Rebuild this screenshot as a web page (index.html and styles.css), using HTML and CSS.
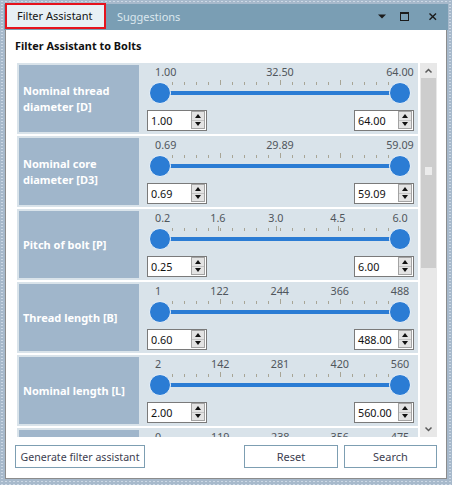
FILE: index.html
```html
<!DOCTYPE html>
<html>
<head>
<meta charset="utf-8">
<link rel="stylesheet" href="styles.css">
</head>
<body>
<div class="window">
  <div class="tabbar">
    <div class="tab tab-active">Filter Assistant</div>
    <div class="tab tab-inactive">Suggestions</div>
    <svg class="win-icons" width="70" height="26" viewBox="0 0 70 26">
      <polygon points="6,10.5 14,10.5 10,14.5" fill="#1b1b1b"/>
      <rect x="28.5" y="8.5" width="8" height="8" fill="none" stroke="#1b1b1b" stroke-width="1"/>
      <rect x="28" y="8" width="9" height="2" fill="#1b1b1b"/>
      <path d="M57.5 9.5 L64 15.8 M64 9.5 L57.5 15.8" stroke="#1b1b1b" stroke-width="1.4"/>
    </svg>
  </div>
  <div class="panel">
    <div class="title">Filter Assistant to Bolts</div>
    <div class="scroller">
      <div class="rows">

        <div class="row">
          <div class="row-label">Nominal thread<br>diameter [D]</div>
          <div class="slider">
            <div class="scale">
              <div class="ticks"></div>
              <span class="tick-tall" style="left:25%"></span>
              <span class="tick-tall" style="left:50%"></span>
              <span class="tick-tall" style="left:75%"></span>
              <span class="tick-label first">1.00</span>
              <span class="tick-label" style="left:50%">32.50</span>
              <span class="tick-label" style="left:100%">64.00</span>
              <div class="track"></div>
              <span class="thumb" style="left:0%"></span>
              <span class="thumb" style="left:100%"></span>
            </div>
            <div class="inputs">
              <div class="num"><span class="num-value">1.00</span><span class="spin"><span class="spin-up"></span><span class="spin-down"></span></span></div>
              <div class="num"><span class="num-value">64.00</span><span class="spin"><span class="spin-up"></span><span class="spin-down"></span></span></div>
            </div>
          </div>
        </div>

        <div class="row">
          <div class="row-label">Nominal core<br>diameter [D3]</div>
          <div class="slider">
            <div class="scale">
              <div class="ticks"></div>
              <span class="tick-tall" style="left:25%"></span>
              <span class="tick-tall" style="left:50%"></span>
              <span class="tick-tall" style="left:75%"></span>
              <span class="tick-label first">0.69</span>
              <span class="tick-label" style="left:50%">29.89</span>
              <span class="tick-label" style="left:100%">59.09</span>
              <div class="track"></div>
              <span class="thumb" style="left:0%"></span>
              <span class="thumb" style="left:100%"></span>
            </div>
            <div class="inputs">
              <div class="num"><span class="num-value">0.69</span><span class="spin"><span class="spin-up"></span><span class="spin-down"></span></span></div>
              <div class="num"><span class="num-value">59.09</span><span class="spin"><span class="spin-up"></span><span class="spin-down"></span></span></div>
            </div>
          </div>
        </div>

        <div class="row">
          <div class="row-label">Pitch of bolt [P]</div>
          <div class="slider">
            <div class="scale">
              <div class="ticks"></div>
              <span class="tick-tall" style="left:24.1%"></span>
              <span class="tick-tall" style="left:48.3%"></span>
              <span class="tick-tall" style="left:74.1%"></span>
              <span class="tick-label first">0.2</span>
              <span class="tick-label" style="left:24.1%">1.6</span>
              <span class="tick-label" style="left:48.3%">3.0</span>
              <span class="tick-label" style="left:74.1%">4.5</span>
              <span class="tick-label" style="left:100%">6.0</span>
              <div class="track"></div>
              <span class="thumb" style="left:0%"></span>
              <span class="thumb" style="left:100%"></span>
            </div>
            <div class="inputs">
              <div class="num"><span class="num-value">0.25</span><span class="spin"><span class="spin-up"></span><span class="spin-down"></span></span></div>
              <div class="num"><span class="num-value">6.00</span><span class="spin"><span class="spin-up"></span><span class="spin-down"></span></span></div>
            </div>
          </div>
        </div>

        <div class="row">
          <div class="row-label">Thread length [B]</div>
          <div class="slider">
            <div class="scale">
              <div class="ticks"></div>
              <span class="tick-tall" style="left:24.8%"></span>
              <span class="tick-tall" style="left:49.9%"></span>
              <span class="tick-tall" style="left:74.9%"></span>
              <span class="tick-label first">1</span>
              <span class="tick-label" style="left:24.8%">122</span>
              <span class="tick-label" style="left:49.9%">244</span>
              <span class="tick-label" style="left:74.9%">366</span>
              <span class="tick-label" style="left:100%">488</span>
              <div class="track"></div>
              <span class="thumb" style="left:0%"></span>
              <span class="thumb" style="left:100%"></span>
            </div>
            <div class="inputs">
              <div class="num"><span class="num-value">0.60</span><span class="spin"><span class="spin-up"></span><span class="spin-down"></span></span></div>
              <div class="num"><span class="num-value">488.00</span><span class="spin"><span class="spin-up"></span><span class="spin-down"></span></span></div>
            </div>
          </div>
        </div>

        <div class="row">
          <div class="row-label">Nominal length [L]</div>
          <div class="slider">
            <div class="scale">
              <div class="ticks"></div>
              <span class="tick-tall" style="left:25.1%"></span>
              <span class="tick-tall" style="left:50%"></span>
              <span class="tick-tall" style="left:74.9%"></span>
              <span class="tick-label first">2</span>
              <span class="tick-label" style="left:25.1%">142</span>
              <span class="tick-label" style="left:50%">281</span>
              <span class="tick-label" style="left:74.9%">420</span>
              <span class="tick-label" style="left:100%">560</span>
              <div class="track"></div>
              <span class="thumb" style="left:0%"></span>
              <span class="thumb" style="left:100%"></span>
            </div>
            <div class="inputs">
              <div class="num"><span class="num-value">2.00</span><span class="spin"><span class="spin-up"></span><span class="spin-down"></span></span></div>
              <div class="num"><span class="num-value">560.00</span><span class="spin"><span class="spin-up"></span><span class="spin-down"></span></span></div>
            </div>
          </div>
        </div>

        <div class="row">
          <div class="row-label"></div>
          <div class="slider">
            <div class="scale">
              <div class="ticks"></div>
              <span class="tick-tall" style="left:25.1%"></span>
              <span class="tick-tall" style="left:50.1%"></span>
              <span class="tick-tall" style="left:74.9%"></span>
              <span class="tick-label first">0</span>
              <span class="tick-label" style="left:25.1%">119</span>
              <span class="tick-label" style="left:50.1%">238</span>
              <span class="tick-label" style="left:74.9%">356</span>
              <span class="tick-label" style="left:100%">475</span>
              <div class="track"></div>
              <span class="thumb" style="left:0%"></span>
              <span class="thumb" style="left:100%"></span>
            </div>
          </div>
        </div>

      </div>
      <div class="scrollbar">
        <div class="sb-arrow">
          <svg width="17" height="15" viewBox="0 0 17 15"><path d="M5.5 9.5 L8.5 6.5 L11.5 9.5" fill="none" stroke="#5a5a5a" stroke-width="1.5"/></svg>
        </div>
        <div class="sb-thumb"><span class="sb-grip"></span></div>
        <div class="sb-arrow sb-bottom">
          <svg width="17" height="15" viewBox="0 0 17 15"><path d="M5.5 5.5 L8.5 8.5 L11.5 5.5" fill="none" stroke="#5a5a5a" stroke-width="1.5"/></svg>
        </div>
      </div>
    </div>
    <div class="footer">
      <button class="btn btn-generate">Generate filter assistant</button>
      <button class="btn btn-reset">Reset</button>
      <button class="btn btn-search">Search</button>
    </div>
  </div>
</div>
</body>
</html>
```
FILE: styles.css
```css
* { box-sizing: border-box; }
html, body { margin: 0; padding: 0; }
body {
  width: 452px;
  height: 485px;
  overflow: hidden;
  background-color: #a7b9cb;
  background-image: radial-gradient(circle, rgba(235,242,250,0.55) 0.6px, transparent 1.1px);
  background-size: 4px 3px;
  font-family: "Noto Sans", "Segoe UI", sans-serif;
  font-size: 11px;
  color: #111;
}
.window {
  margin: 4px 0 0 4px;
  width: 444px;
}
.tabbar {
  height: 26px;
  display: flex;
  background: #7a9eb4;
}
.tab {
  display: flex;
  align-items: center;
  font-size: 11px;
  line-height: 14px;
}
.tab-active {
  margin: -1px 0 0 1px;
  width: 101px;
  height: 26px;
  padding: 0 0 1px 10px;
  background: #e7f0f5;
  border: 2px solid #e5131d;
  color: #141414;
}
.tab-inactive {
  padding-left: 11px;
  color: #dbe7ee;
}
.win-icons {
  margin-left: auto;
  margin-right: 6px;
}
.panel {
  margin-left: 1px;
  width: 442px;
  height: 449px;
  background: #fff;
  border: 1px solid #8c8c8c;
  border-top: 0;
  display: flex;
  flex-direction: column;
}
.title {
  margin: 8px 0 0 9px;
  font-weight: 700;
  font-size: 10.9px;
  line-height: 16px;
  color: #111;
}
.scroller {
  margin: 9px 9px 0 11px;
  height: 374px;
  display: flex;
  gap: 2px;
}
.rows {
  flex: 1;
  overflow: hidden;
  display: flex;
  flex-direction: column;
  gap: 2px;
}
.row {
  flex: none;
  height: 71px;
  padding: 2px;
  display: flex;
  background: #d9e3ea;
}
.row-label {
  width: 120px;
  flex: none;
  display: flex;
  align-items: center;
  padding: 0 4px;
  background: #a0b6cb;
  color: #fff;
  font-weight: 700;
  font-size: 11px;
  line-height: 16px;
}
.slider {
  flex: 1;
  display: flex;
  flex-direction: column;
}
.scale {
  position: relative;
  height: 42px;
  margin: 0 16px 0 21px;
}
.ticks {
  position: absolute;
  left: 0;
  top: 17px;
  width: 241px;
  height: 3px;
  background: repeating-linear-gradient(to right, #a8a596 0 1px, transparent 1px 12px);
}
.tick-tall {
  position: absolute;
  top: 15px;
  width: 1px;
  height: 5px;
  background: #a8a596;
}
.tick-label {
  position: absolute;
  top: 0;
  line-height: 14px;
  font-size: 10.8px;
  color: #50565c;
  white-space: nowrap;
  transform: translateX(-50%);
}
.tick-label.first {
  left: -5px;
  transform: none;
}
.track {
  position: absolute;
  left: 0;
  right: 0;
  top: 26px;
  height: 4px;
  background: #2b7cd4;
}
.thumb {
  position: absolute;
  top: 17px;
  width: 22px;
  height: 22px;
  margin-left: -11px;
  border-radius: 50%;
  background: #2b7cd4;
  border: 1px solid #e9f1f8;
}
.inputs {
  margin-top: 3px;
  display: flex;
  justify-content: space-between;
  padding: 0 2px 0 8px;
}
.num {
  width: 60px;
  height: 21px;
  border: 1px solid #7a7a7a;
  background: #fff;
  display: flex;
  align-items: center;
  padding-left: 3px;
}
.num-value {
  font-size: 10.8px;
  line-height: 14px;
  color: #111;
}
.spin {
  margin: 0 1px 0 auto;
  align-self: flex-start;
  width: 14px;
  height: 18px;
  border: 1px solid #a3a3a3;
  background: #e3e3e3;
  display: flex;
  flex-direction: column;
}
.spin-up, .spin-down {
  flex: 1;
  display: flex;
  align-items: center;
  justify-content: center;
}
.spin-up { border-bottom: 1px solid #c4c4c4; }
.spin-up::before {
  content: "";
  border-left: 3.5px solid transparent;
  border-right: 3.5px solid transparent;
  border-bottom: 4px solid #111;
}
.spin-down::before {
  content: "";
  border-left: 3.5px solid transparent;
  border-right: 3.5px solid transparent;
  border-top: 4px solid #111;
}
.scrollbar {
  width: 17px;
  flex: none;
  display: flex;
  flex-direction: column;
  background: #e8e8e8;
}
.sb-arrow {
  height: 15px;
  flex: none;
}
.sb-arrow svg { display: block; }
.sb-bottom { margin-top: auto; }
.sb-thumb {
  height: 190px;
  margin: 0 1px;
  background: #cdcdcd;
  display: flex;
  align-items: center;
  justify-content: center;
}
.sb-grip {
  width: 7px;
  height: 8px;
  margin-top: -4px;
  background: #ececec;
}
.footer {
  margin-top: 8px;
  height: 23px;
  display: flex;
  padding: 0 9px 0 9px;
}
.btn {
  height: 23px;
  background: #fff;
  border: 1px solid #7d9eb2;
  font-family: "Noto Sans", "Segoe UI", sans-serif;
  font-size: 11px;
  color: #3d4050;
  padding: 0;
  white-space: nowrap;
}
.btn-generate { width: 130px; font-size: 10.6px; }
.btn-reset { width: 94px; margin-left: auto; }
.btn-search { width: 93px; margin-left: 6px; }
```
